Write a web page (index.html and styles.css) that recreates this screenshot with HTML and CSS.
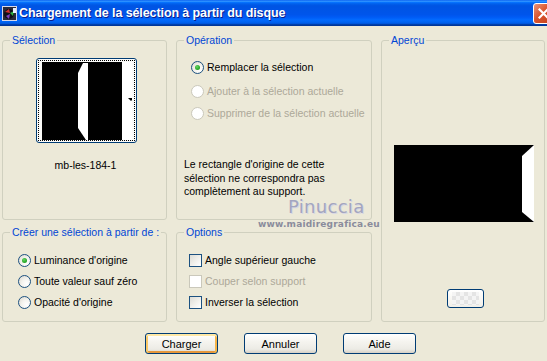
FILE: index.html
```html
<!DOCTYPE html>
<html>
	<head>
		<meta charset="utf-8">
		<title>Chargement de la sélection à partir du disque</title>
		<link rel="stylesheet" href="styles.css">
	</head>
	<body>
		<div class="window">
			<!-- barre de titre -->
			<div class="titlebar">
				<span class="app-icon">
					<svg width="15" height="15" viewBox="0 0 15 15">
						<rect x="0.5" y="0.5" width="14" height="14" fill="#2a2a3a" stroke="#d8d8e8"/>
						<circle cx="7" cy="8" r="5" fill="#101018"/>
						<path d="M3 6 L7 3 L8 7 Z" fill="#d03030"/>
						<path d="M8 7 L12 5 L11 10 Z" fill="#30b040"/>
						<path d="M4 10 L8 8 L7 13 Z" fill="#8040c0"/>
						<rect x="11" y="2" width="3" height="5" fill="#e8f0ff"/>
					</svg>
				</span>
				<span class="title">Chargement de la sélection à partir du disque</span>
				<span class="close">
					<svg width="11" height="11" viewBox="0 0 11 11">
						<path d="M1.5 1.5 L9.5 9.5 M9.5 1.5 L1.5 9.5" stroke="#fff" stroke-width="2.2" stroke-linecap="square"/>
					</svg>
				</span>
			</div>

			<div class="content">
				<!-- Sélection -->
				<fieldset class="group group-sel">
					<legend>Sélection</legend>
					<div class="thumb">
						<div class="thumb-focus">
							<svg width="90" height="78" viewBox="0 0 90 78">
								<rect x="0" y="0" width="80" height="78" fill="#000"/>
								<rect x="80" y="0" width="10" height="78" fill="#fff"/>
								<polygon points="41,1 46,1 46,78 44,78 36,66 36,11" fill="#fff"/>
								<polygon points="86,36 92,36 89,39" fill="#000"/>
							</svg>
						</div>
					</div>
					<div class="sel-name">mb-les-184-1</div>
				</fieldset>

				<!-- Opération -->
				<fieldset class="group group-op">
					<legend>Opération</legend>
					<div class="op-list">
						<label class="opt"><span class="radio checked"></span>Remplacer la sélection</label>
						<label class="opt disabled"><span class="radio"></span>Ajouter à la sélection actuelle</label>
						<label class="opt disabled last"><span class="radio"></span>Supprimer de la sélection actuelle</label>
					</div>
					<p class="note">Le rectangle d'origine de cette sélection ne correspondra pas complètement au support.</p>
				</fieldset>

				<!-- Aperçu -->
				<fieldset class="group group-preview">
					<legend>Aperçu</legend>
					<div class="preview">
						<svg width="140" height="77" viewBox="0 0 140 77">
							<rect width="140" height="77" fill="#000"/>
							<polygon points="128,11 140,0 140,77 128,67" fill="#fff"/>
						</svg>
					</div>
					<div class="mini-btn"><span class="mini-img"></span></div>
				</fieldset>

				<!-- Créer une sélection -->
				<fieldset class="group group-create">
					<legend>Créer une sélection à partir de :</legend>
					<div class="opt-list">
						<label class="opt"><span class="radio checked"></span>Luminance d'origine</label>
						<label class="opt"><span class="radio"></span>Toute valeur sauf zéro</label>
						<label class="opt"><span class="radio"></span>Opacité d'origine</label>
					</div>
				</fieldset>

				<!-- Options -->
				<fieldset class="group group-options">
					<legend>Options</legend>
					<div class="opt-list">
						<label class="opt"><span class="check"></span>Angle supérieur gauche</label>
						<label class="opt disabled"><span class="check"></span>Couper selon support</label>
						<label class="opt"><span class="check"></span>Inverser la sélection</label>
					</div>
				</fieldset>
			</div>

			<div class="actions">
				<button class="btn btn-default">Charger</button>
				<button class="btn">Annuler</button>
				<button class="btn">Aide</button>
			</div>

			<!-- filigrane -->
			<div class="watermark">
				<div class="wm-name">Pinuccia</div>
				<div class="wm-url">www.maidiregrafica.eu</div>
			</div>
		</div>
	</body>
</html>
```

FILE: styles.css
```css
body {
	margin: 0;
	background-color: #ece9d8;
	font-family: "Liberation Sans", Arial, sans-serif;
	font-size: 10.5px;
	color: #000;
}

.window {
	position: relative;
	width: 547px;
	height: 361px;
	overflow: hidden;
	background-color: #ece9d8;
}

/* barre de titre */
.titlebar {
	display: flex;
	align-items: center;
	height: 26px;
	padding-left: 2px;
	background: linear-gradient(#0058ee 0%, #3593ff 4%, #288eff 6%, #127dff 8%, #036ffc 10%, #0262ee 14%, #0057e5 20%, #0054e3 24%, #0055eb 56%, #005bf5 66%, #026afe 76%, #0062ef 86%, #0052d6 92%, #0040ab 94%, #003092 100%);
}

.app-icon {
	display: flex;
	width: 15px;
	height: 15px;
	margin-top: 1px;
}

.title {
	padding-left: 2px;
	color: #fff;
	font-family: "Liberation Sans", Arial, sans-serif;
	font-weight: bold;
	font-size: 12.5px;
	letter-spacing: -0.1px;
	text-shadow: 1px 1px 0 #0a1e8c;
	white-space: nowrap;
}

.close {
	display: flex;
	align-items: center;
	justify-content: center;
	box-sizing: border-box;
	width: 21px;
	height: 21px;
	margin-left: auto;
	margin-right: -7px;
	flex-shrink: 0;
	border: 1px solid #fff;
	border-radius: 3px;
	background: linear-gradient(135deg, #e9937a 0%, #d9542d 45%, #c2401a 100%);
}

/* contenu */
.content {
	display: grid;
	grid-template-columns: 165px 196px 164px;
	grid-template-rows: 186px 96px;
	column-gap: 9px;
	row-gap: 6px;
	padding: 8px 0 0 2px;
}

.group {
	margin: 0;
	padding: 0;
	min-width: 0;
	border: 1px solid #d0d0bf;
	border-radius: 3px;
}

.group legend {
	margin-left: 7px;
	padding: 0 2px;
	color: #0046d5;
	line-height: 13px;
	white-space: nowrap;
}

.group-sel {
	grid-column: 1;
	grid-row: 1;
	display: flex;
	flex-direction: column;
	align-items: center;
}

.group-op {
	grid-column: 2;
	grid-row: 1;
}

.group-preview {
	grid-column: 3;
	grid-row: 1 / span 2;
	display: flex;
	flex-direction: column;
	align-items: center;
}

.group-create {
	grid-column: 1;
	grid-row: 2;
}

.group-options {
	grid-column: 2;
	grid-row: 2;
}

/* vignette de la sélection */
.thumb {
	box-sizing: border-box;
	width: 101px;
	height: 85px;
	margin: 11px 0 0 4px;
	padding: 1px;
	border: 1px solid #003c74;
	border-radius: 3px;
	background-color: #fbfbf9;
}

.thumb-focus {
	display: flex;
	box-sizing: border-box;
	height: 100%;
	padding: 1px 0 0 3px;
	border: 1px dotted #000;
}

.sel-name {
	margin-top: 16px;
	margin-left: 2px;
	line-height: 13px;
}

/* listes d'options */
.op-list {
	display: flex;
	flex-direction: column;
	gap: 10px;
	padding: 13px 0 0 14px;
}

.op-list .last {
	margin-top: -2px;
}

.opt-list {
	display: flex;
	flex-direction: column;
	gap: 7px;
	padding: 14px 0 0 15px;
}

.group-options .opt-list {
	padding-left: 12px;
}

.opt {
	display: flex;
	align-items: center;
	gap: 3px;
	height: 14px;
	white-space: nowrap;
}

.opt.disabled {
	color: #aca899;
}

.radio {
	position: relative;
	box-sizing: border-box;
	width: 13px;
	height: 13px;
	border: 1px solid #1c5180;
	border-radius: 50%;
	background: radial-gradient(circle at 70% 70%, #fff 0%, #f4f3ee 45%, #d8d5cb 100%);
}

.radio.checked::after {
	content: "";
	position: absolute;
	left: 3px;
	top: 3px;
	width: 5px;
	height: 5px;
	border-radius: 50%;
	background: radial-gradient(circle at 40% 35%, #63d563 0%, #21a121 70%);
}

.opt.disabled .radio {
	border-color: #cac8bb;
	background: #fff;
}

.check {
	box-sizing: border-box;
	width: 13px;
	height: 13px;
	border: 1px solid #1c5180;
	background: linear-gradient(135deg, #dcdbd5 0%, #f0efea 50%, #fff 100%);
}

.opt.disabled .check {
	border-color: #cac8bb;
	background: #fff;
}

.note {
	width: 170px;
	margin: 38px 0 0 7px;
	line-height: 13.5px;
}

/* aperçu */
.preview {
	display: flex;
	margin-top: 98px;
	margin-left: 1px;
}

.mini-btn {
	display: flex;
	box-sizing: border-box;
	width: 37px;
	height: 19px;
	margin-top: 67px;
	margin-left: 4px;
	padding: 2px 4px;
	border: 1px solid #003c74;
	border-radius: 3px;
	background: linear-gradient(#fff, #f1efe8);
}

.mini-img {
	flex: 1;
	background-color: #f4f4f4;
	background-image: linear-gradient(45deg, #e4e4e4 25%, transparent 25%, transparent 75%, #e4e4e4 75%), linear-gradient(45deg, #e4e4e4 25%, transparent 25%, transparent 75%, #e4e4e4 75%);
	background-size: 8px 8px;
	background-position: 0 0, 4px 4px;
}

/* boutons */
.actions {
	display: flex;
	gap: 26px;
	padding: 11px 0 0 145px;
}

.btn {
	box-sizing: border-box;
	width: 73px;
	height: 21px;
	padding: 0;
	border: 1px solid #003c74;
	border-radius: 3px;
	background: linear-gradient(#fff 0%, #f5f4ef 40%, #ecebe5 80%, #d6d0c5 100%);
	font-family: "Liberation Sans", Arial, sans-serif;
	font-size: 11px;
	color: #000;
}

.btn-default {
	box-shadow: inset 0 2px 0 #ffe8a5, inset 2px 0 0 #f9c867, inset -2px 0 0 #f5b54a, inset 0 -2px 0 #e5973c;
}

/* filigrane */
.watermark {
	position: absolute;
	left: 258px;
	top: 196px;
	width: 122px;
}

.wm-name {
	padding-left: 30px;
	font-family: "DejaVu Sans", sans-serif;
	font-size: 18px;
	line-height: 22px;
	color: #a3a5bf;
	text-shadow: 1px 1px 0 #d8d8e4;
	letter-spacing: 0.3px;
}

.wm-url {
	margin-top: 0;
	font-family: "DejaVu Sans", sans-serif;
	font-size: 9px;
	font-weight: bold;
	line-height: 12px;
	color: #8a8c9c;
	letter-spacing: 0.2px;
	white-space: nowrap;
}
```
